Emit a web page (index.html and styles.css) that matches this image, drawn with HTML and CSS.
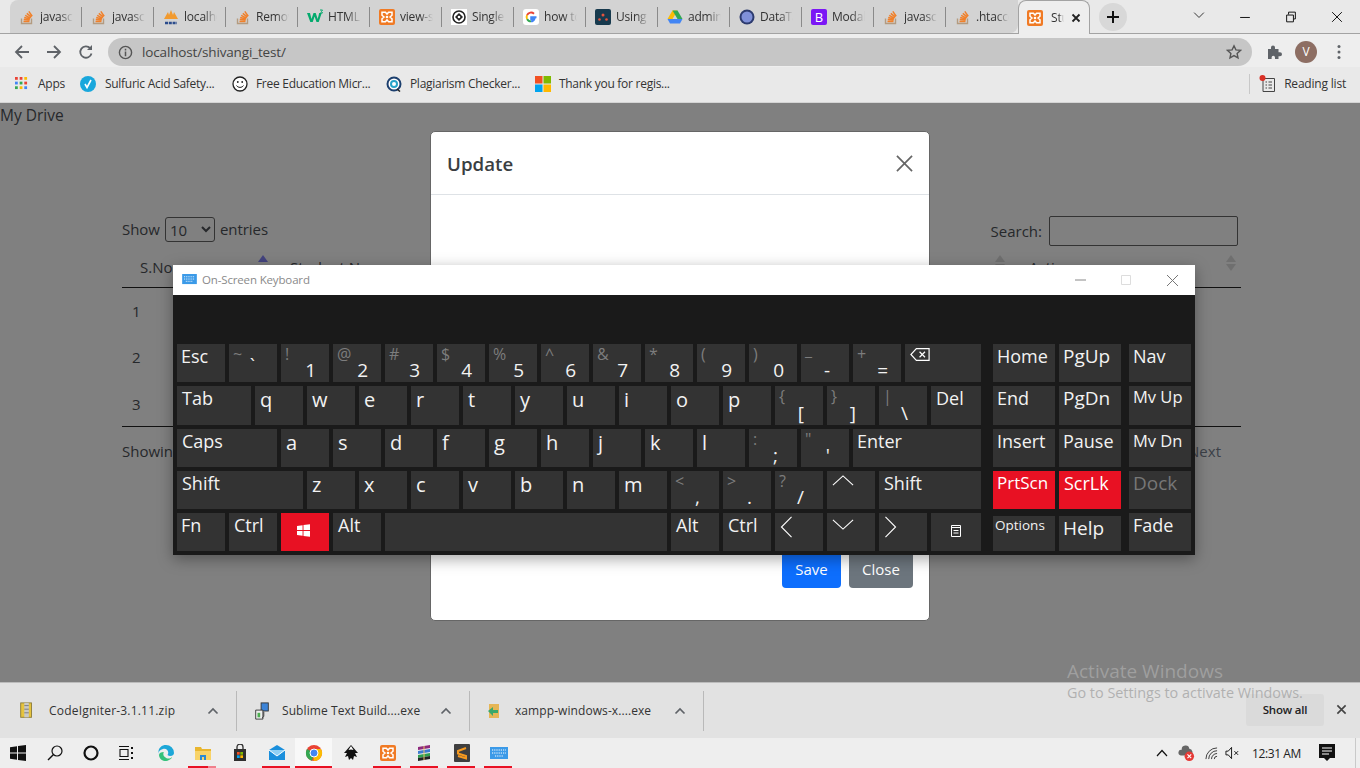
FILE: index.html
```html
<!DOCTYPE html>
<html lang="en">
<head>
<meta charset="utf-8">
<title>Student</title>
<link rel="stylesheet" href="styles.css">
</head>
<body>
<svg class="defs" width="0" height="0" aria-hidden="true">
  <symbol id="so" viewBox="0 0 16 16"><path d="M2.500 9.500v5h10v-5" fill="none" stroke="#b39b80" stroke-width="1.400"/><path d="M4.500 12.600h6M4.700 10.600l6 .5M5.200 8.500l5.800 1.500M6.200 6.300l5.300 2.800M7.800 4.300l4.600 3.800M9.800 2.400l3.400 4.800" fill="none" stroke="#f0802a" stroke-width="1.500"/></symbol>
  <symbol id="xampp" viewBox="0 0 16 16"><rect width="16" height="16" rx="2" fill="#f07a24"/><path d="M3 3.200h3.400L8 5l1.600-1.800H13V6.200L11 8l2 1.800v3H9.600L8 11l-1.600 1.800H3V9.800L5 8 3 6.200z" fill="none" stroke="#fff" stroke-width="1.500"/><circle cx="8" cy="8" r="1.300" fill="#fff"/></symbol>
  <symbol id="chev" viewBox="0 0 12 8"><path d="M1.500 6.500 6 2l4.500 4.500" fill="none" stroke="#5f6368" stroke-width="1.700"/></symbol>
</svg>

<header class="tabstrip">
  <div class="tabs">
    <div class="tab"><svg class="fav"><use href="#so"/></svg><span class="tab-label">javascript</span></div>
    <div class="tab"><svg class="fav"><use href="#so"/></svg><span class="tab-label">javascript</span></div>
    <div class="tab"><svg class="fav" viewBox="0 0 16 16"><path d="M1 10 5 3l1 3 2-5 2 5 1-3 4 7z" fill="#f29a2e"/><path d="M2 14h12" stroke="#2b4c8c" stroke-width="2.600" stroke-dasharray="3 .8"/></svg><span class="tab-label">localhost</span></div>
    <div class="tab"><svg class="fav"><use href="#so"/></svg><span class="tab-label">Remove</span></div>
    <div class="tab"><svg class="fav" viewBox="0 0 16 16"><path d="M0 4h3l1.500 6L6.500 4h2.200l2 6L12.200 4h2.500l-3 9H9.500L7.600 7.500 5.700 13H3.300z" fill="#04aa6d"/><path d="M13 1h2.500l-1 1.500 1 1.500H13" fill="none" stroke="#04aa6d"/></svg><span class="tab-label">HTML</span></div>
    <div class="tab"><svg class="fav"><use href="#xampp"/></svg><span class="tab-label">view-source</span></div>
    <div class="tab"><svg class="fav" viewBox="0 0 16 16"><rect width="16" height="16" fill="#fff"/><circle cx="8" cy="8" r="6" fill="none" stroke="#222" stroke-width="1.600"/><path d="M8 4 12 8 8 12 4 8z" fill="#222"/><circle cx="8" cy="8" r="1.300" fill="#fff"/></svg><span class="tab-label">Single</span></div>
    <div class="tab"><svg class="fav" viewBox="0 0 16 16"><rect width="16" height="16" rx="3" fill="#fff"/><path d="M13.500 8.200H8.200v2h3.100a3.400 3.400 0 0 1-3.300 2.200" fill="none" stroke="#4285f4" stroke-width="1.900"/><path d="M8 12.400a4.400 4.400 0 0 1-3.900-2.400" fill="none" stroke="#34a853" stroke-width="1.900"/><path d="M4.100 10a4.400 4.400 0 0 1 0-4" fill="none" stroke="#fbbc05" stroke-width="1.900"/><path d="M4.100 6A4.400 4.400 0 0 1 11 4.700" fill="none" stroke="#ea4335" stroke-width="1.900"/></svg><span class="tab-label">how to</span></div>
    <div class="tab"><svg class="fav" viewBox="0 0 16 16"><rect width="16" height="16" rx="2" fill="#173a4e"/><circle cx="8" cy="6" r="1.500" fill="#e5533d"/><circle cx="4.500" cy="10.500" r="1.300" fill="#e5533d"/><circle cx="11.500" cy="10.500" r="1.300" fill="#e5533d"/></svg><span class="tab-label">Using</span></div>
    <div class="tab"><svg class="fav" viewBox="0 0 16 16"><path d="M5.500 1.500h5l-5 8.500H.5z" fill="#fbbc04"/><path d="M10.500 1.500 15.500 10h-5L5.500 1.500z" fill="#34a853"/><path d="M.5 10h15l-2.500 4.500H3z" fill="#4285f4"/></svg><span class="tab-label">admin</span></div>
    <div class="tab"><svg class="fav" viewBox="0 0 16 16"><circle cx="8" cy="8" r="7.500" fill="#2c3a6e"/><circle cx="8" cy="8" r="5.500" fill="#7f90d8"/></svg><span class="tab-label">DataTables</span></div>
    <div class="tab"><span class="fav boot">B</span><span class="tab-label">Modal</span></div>
    <div class="tab"><svg class="fav"><use href="#so"/></svg><span class="tab-label">javascript</span></div>
    <div class="tab"><svg class="fav"><use href="#so"/></svg><span class="tab-label">.htaccess</span></div>
    <div class="tab tab-active"><svg class="fav"><use href="#xampp"/></svg><span class="tab-label tab-label-short">Student</span><svg class="tab-x" viewBox="0 0 10 10"><path d="M1.500 1.500l7 7M8.500 1.500l-7 7" stroke="#222" stroke-width="1.800"/></svg></div>
  </div>
  <div class="newtab"><svg width="14" height="14" viewBox="0 0 14 14"><path d="M7 1v12M1 7h12" stroke="#111" stroke-width="2"/></svg></div>
  <div class="winctl">
    <svg class="ctl" viewBox="0 0 46 34"><path d="M18 13l5 5 5-5" fill="none" stroke="#333"/></svg>
    <svg class="ctl" viewBox="0 0 46 34"><path d="M18 18h10" stroke="#111"/></svg>
    <svg class="ctl" viewBox="0 0 46 34"><path d="M18.500 15.500h7v7h-7zM20.500 15v-2.500h7v7H26" fill="none" stroke="#111"/></svg>
    <svg class="ctl" viewBox="0 0 46 34"><path d="M18 12.500l10 10M28 12.500l-10 10" stroke="#111"/></svg>
  </div>
</header>

<nav class="toolbar">
  <svg class="nav-ic" viewBox="0 0 16 16"><path d="M15 8H2M8 2 2 8l6 6" fill="none" stroke="#5f6368" stroke-width="1.800"/></svg>
  <svg class="nav-ic" viewBox="0 0 16 16"><path d="M1 8h13M8 2l6 6-6 6" fill="none" stroke="#5f6368" stroke-width="1.800"/></svg>
  <svg class="nav-ic" viewBox="0 0 16 16"><path d="M13.500 9.500a5.700 5.700 0 1 1-1.300-5.300" fill="none" stroke="#5f6368" stroke-width="1.800"/><path d="M14 1v5H9z" fill="#5f6368"/></svg>
  <div class="omnibox">
    <svg class="info" viewBox="0 0 16 16"><circle cx="8" cy="8" r="6.500" fill="none" stroke="#555" stroke-width="1.500"/><path d="M8 7v5M8 4v1.800" stroke="#555" stroke-width="1.600"/></svg>
    <span class="url">localhost/shivangi_test/</span>
    <svg class="star" viewBox="0 0 16 16"><path d="M8 1.800l1.900 4.100 4.500.5-3.300 3 .9 4.400L8 11.600l-4 2.200.9-4.400-3.300-3 4.500-.5z" fill="none" stroke="#555" stroke-width="1.400"/></svg>
  </div>
  <svg class="puzzle" viewBox="0 0 16 16"><path d="M2 5h3V3.500a2 2 0 0 1 4 0V5h3.500v3.200H14a2 2 0 0 1 0 4h-1.500V15H9v-1.500a1.700 1.700 0 0 0-3.400 0V15H2z" fill="#5f6368"/></svg>
  <div class="avatar">V</div>
  <svg class="dots" viewBox="0 0 4 16"><circle cx="2" cy="2.500" r="1.500" fill="#5f6368"/><circle cx="2" cy="8" r="1.500" fill="#5f6368"/><circle cx="2" cy="13.500" r="1.500" fill="#5f6368"/></svg>
</nav>

<nav class="bookmarks">
  <div class="bm bm-apps"><svg class="bm-ic" viewBox="0 0 14 14"><g><rect x="0" y="0" width="3" height="3" fill="#ea4335"/><rect x="5" y="0" width="3" height="3" fill="#ea4335"/><rect x="10" y="0" width="3" height="3" fill="#fbbc05"/><rect x="0" y="5" width="3" height="3" fill="#4285f4"/><rect x="5" y="5" width="3" height="3" fill="#34a853"/><rect x="10" y="5" width="3" height="3" fill="#ea4335"/><rect x="0" y="10" width="3" height="3" fill="#34a853"/><rect x="5" y="10" width="3" height="3" fill="#fbbc05"/><rect x="10" y="10" width="3" height="3" fill="#4285f4"/></g></svg><span>Apps</span></div>
  <div class="bm bm-2"><svg class="bm-ic16" viewBox="0 0 16 16"><circle cx="8" cy="8" r="8" fill="#19a7dc"/><path d="M5 8l2 3.500L11 4" fill="none" stroke="#fff" stroke-width="1.600"/></svg><span>Sulfuric Acid Safety...</span></div>
  <div class="bm bm-3"><svg class="bm-ic16" viewBox="0 0 16 16"><circle cx="8" cy="8" r="7" fill="#fff" stroke="#222" stroke-width="1.300"/><path d="M4.500 9.500c1.500 2.500 5.500 2.500 7 0" fill="none" stroke="#222"/><circle cx="5.800" cy="6" r=".9" fill="#222"/><circle cx="10.200" cy="6" r=".9" fill="#222"/></svg><span>Free Education Micr...</span></div>
  <div class="bm bm-4"><svg class="bm-ic16" viewBox="0 0 16 16"><circle cx="8" cy="8" r="6.500" fill="#fff" stroke="#1c3f6e" stroke-width="2"/><circle cx="8" cy="8" r="3" fill="none" stroke="#27a3c9" stroke-width="2"/><path d="M11 13l3 2.500" stroke="#222" stroke-width="1.500"/></svg><span>Plagiarism Checker...</span></div>
  <div class="bm bm-5"><svg class="bm-ic16" viewBox="0 0 16 16"><rect width="7.500" height="7.500" fill="#f25022"/><rect x="8.500" width="7.500" height="7.500" fill="#7fba00"/><rect y="8.500" width="7.500" height="7.500" fill="#00a4ef"/><rect x="8.500" y="8.500" width="7.500" height="7.500" fill="#ffb900"/></svg><span>Thank you for regis...</span></div>
  <div class="reading"><svg class="reading-ic" viewBox="0 0 18 18"><path d="M4 3.500h11.500v13H4z" fill="none" stroke="#444"/><path d="M6.500 7h1.500M9.500 7H13M6.500 10h1.500M9.500 10H13M6.500 13h1.500M9.500 13H13" stroke="#444" stroke-width="1.200"/><circle cx="3.500" cy="3" r="3" fill="#d93025"/></svg><span>Reading list</span></div>
</nav>

<main class="page">
  <div class="mydrive">My Drive</div>
  <section class="dt">
    <div class="dt-top">
      <label class="dt-len">Show <select class="dt-sel"><option>10</option></select> entries</label>
      <label class="dt-search">Search: <input class="dt-input" type="text"></label>
    </div>
    <table class="dt-table">
      <thead>
        <tr><th class="th-a">S.No<span class="sort sort-up"></span></th><th class="th-b">Student Name<span class="sort sort-both sort-b"></span></th><th class="th-c">Action<span class="sort sort-both sort-c"></span></th></tr>
      </thead>
      <tbody>
        <tr><td>1</td><td></td><td></td></tr>
        <tr><td>2</td><td></td><td></td></tr>
        <tr><td>3</td><td></td><td></td></tr>
      </tbody>
    </table>
    <div class="dt-foot"><span>Showing 1 to 3 of 3 entries</span><span class="dt-next">Next</span></div>
  </section>

  <div class="modal">
    <div class="modal-head"><h5 class="modal-title">Update</h5><svg class="modal-x" viewBox="0 0 18 18"><path d="M1 1l16 16M17 1 1 17" stroke="#666" stroke-width="1.800"/></svg></div>
    <div class="modal-body"></div>
    <div class="modal-foot"><button class="btn btn-save">Save</button><button class="btn btn-close">Close</button></div>
  </div>

  <div class="osk">
    <div class="osk-title">
      <svg class="osk-ic" viewBox="0 0 16 12"><rect width="16" height="11" fill="#3b9ae8"/><path d="M2 3h12M2 5.500h12M4 8h8" stroke="#fff" stroke-dasharray="1 1"/></svg>
      <span class="osk-name">On-Screen Keyboard</span>
      <svg class="osk-ctl" viewBox="0 0 46 30"><path d="M18 15h11" stroke="#888"/></svg>
      <svg class="osk-ctl" viewBox="0 0 46 30"><path d="M18.500 10.500h9v9h-9z" fill="none" stroke="#ddd"/></svg>
      <svg class="osk-ctl" viewBox="0 0 46 30"><path d="M18 10l11 11M29 10 18 21" stroke="#777"/></svg>
    </div>
    <div class="osk-body">
      <div class="keys">
        <div class="row row-a">
          <div class="k k-4">Esc</div>
          <div class="k sym"><span class="s">~</span><span class="m m-tick">`</span></div>
          <div class="k sym"><span class="s">!</span><span class="m">1</span></div>
          <div class="k sym"><span class="s">@</span><span class="m">2</span></div>
          <div class="k sym"><span class="s">#</span><span class="m">3</span></div>
          <div class="k sym"><span class="s">$</span><span class="m">4</span></div>
          <div class="k sym"><span class="s">%</span><span class="m">5</span></div>
          <div class="k sym"><span class="s">^</span><span class="m">6</span></div>
          <div class="k sym"><span class="s">&amp;</span><span class="m">7</span></div>
          <div class="k sym"><span class="s">*</span><span class="m">8</span></div>
          <div class="k sym"><span class="s">(</span><span class="m">9</span></div>
          <div class="k sym"><span class="s">)</span><span class="m">0</span></div>
          <div class="k sym p"><span class="s s-under">_</span><span class="m">-</span></div>
          <div class="k sym"><span class="s">+</span><span class="m">=</span></div>
          <div class="k k-back"><svg class="back-ic" viewBox="0 0 22 16"><path d="M7 1.500h14v13H7L1 8z" fill="none" stroke="#fff" stroke-width="1.300"/><path d="M10.500 5l6 6M16.500 5l-6 6" stroke="#fff" stroke-width="1.300"/></svg></div>
        </div>
        <div class="row row-b">
          <div class="k k-tab">Tab</div>
          <div class="k l">q</div><div class="k l">w</div><div class="k l">e</div><div class="k l">r</div><div class="k l">t</div><div class="k l">y</div><div class="k l">u</div><div class="k l">i</div><div class="k l">o</div><div class="k l">p</div>
          <div class="k sym p"><span class="s">{</span><span class="m">[</span></div>
          <div class="k sym p"><span class="s">}</span><span class="m">]</span></div>
          <div class="k sym p"><span class="s">|</span><span class="m">\</span></div>
          <div class="k k-del">Del</div>
        </div>
        <div class="row row-a">
          <div class="k k-caps">Caps</div>
          <div class="k l">a</div><div class="k l">s</div><div class="k l">d</div><div class="k l">f</div><div class="k l">g</div><div class="k l">h</div><div class="k l">j</div><div class="k l">k</div><div class="k l">l</div>
          <div class="k sym p"><span class="s">:</span><span class="m">;</span></div>
          <div class="k sym p"><span class="s">"</span><span class="m">'</span></div>
          <div class="k k-enter k-4">Enter</div>
        </div>
        <div class="row row-a">
          <div class="k k-shift">Shift</div>
          <div class="k l">z</div><div class="k l">x</div><div class="k l">c</div><div class="k l">v</div><div class="k l">b</div><div class="k l">n</div><div class="k l">m</div>
          <div class="k sym p"><span class="s">&lt;</span><span class="m">,</span></div>
          <div class="k sym p"><span class="s">&gt;</span><span class="m">.</span></div>
          <div class="k sym p"><span class="s">?</span><span class="m">/</span></div>
          <div class="k"><svg class="arrow" viewBox="0 0 24 14"><path d="M1 12 12 2l11 10" fill="none" stroke="#fff" stroke-width="1.200"/></svg></div>
          <div class="k k-rshift">Shift</div>
        </div>
        <div class="row row-a">
          <div class="k k-4">Fn</div>
          <div class="k">Ctrl</div>
          <div class="k k-red k-center"><svg class="win-ic" viewBox="0 0 14 14"><path d="M0 2.200 6 1.400v5.100H0zM7 1.200 14 .2v6.300H7zM0 7.500h6v5.100l-6-.8zM7 7.500h7v6.300l-7-1z" fill="#fff"/></svg></div>
          <div class="k">Alt</div>
          <div class="k k-space"></div>
          <div class="k">Alt</div>
          <div class="k">Ctrl</div>
          <div class="k"><svg class="arrow-v" viewBox="0 0 14 24"><path d="M12.500 1 1.500 12l11 11" fill="none" stroke="#fff" stroke-width="1.200"/></svg></div>
          <div class="k"><svg class="arrow arrow-d" viewBox="0 0 24 14"><path d="M1 2l11 10L23 2" fill="none" stroke="#fff" stroke-width="1.200"/></svg></div>
          <div class="k"><svg class="arrow-v" viewBox="0 0 14 24"><path d="M1.500 1l11 11-11 11" fill="none" stroke="#fff" stroke-width="1.200"/></svg></div>
          <div class="k k-del k-center"><svg class="menu-ic" viewBox="0 0 10 12"><path d="M.5.500h9v11h-9zM.5 2.500h9" fill="none" stroke="#fff"/><path d="M2.500 5.500h5M2.500 8h5" stroke="#fff"/></svg></div>
        </div>
      </div>
      <div class="keys">
        <div class="row row-a"><div class="k k-side">Home</div><div class="k k-side k-big">PgUp</div><div class="k k-side k-nav">Nav</div></div>
        <div class="row row-b"><div class="k k-side">End</div><div class="k k-side k-big">PgDn</div><div class="k k-side k-nav k-sm k-up">Mv Up</div></div>
        <div class="row row-a"><div class="k k-side">Insert</div><div class="k k-side">Pause</div><div class="k k-side k-nav k-sm">Mv Dn</div></div>
        <div class="row row-a"><div class="k k-side k-red k-prt">PrtScn</div><div class="k k-side k-red k-scr">ScrLk</div><div class="k k-side k-nav k-dim">Dock</div></div>
        <div class="row row-a"><div class="k k-side k-low k-xs">Options</div><div class="k k-side k-low k-help">Help</div><div class="k k-side k-nav">Fade</div></div>
      </div>
    </div>
  </div>
</main>

<section class="downloads">
  <div class="dl dl-1"><svg class="dl-ic" viewBox="0 0 16 20"><rect x="1" y="1" width="12" height="16" fill="#e6c43e" stroke="#8a7b3a"/><rect x="5" y="1" width="5" height="16" fill="#c9c9c9"/><path d="M5 4h5M5 8h5M5 12h5" stroke="#777"/></svg><span class="dl-name dl-wide">CodeIgniter-3.1.11.zip</span><svg class="dl-chev"><use href="#chev"/></svg></div>
  <div class="dl dl-2"><svg class="dl-ic dl-ic2" viewBox="0 0 18 20"><rect x="8" y="1" width="8" height="9" fill="#3c84d8" stroke="#333"/><path d="M2 9h8v10H2z" fill="#eee" stroke="#333"/><path d="M4 12h3v5H4z" fill="#4caf50"/><path d="M11 11v5l-2 2" fill="none" stroke="#333"/></svg><span class="dl-name">Sublime Text Build....exe</span><svg class="dl-chev"><use href="#chev"/></svg></div>
  <div class="dl dl-3"><svg class="dl-ic dl-ic3" viewBox="0 0 14 16"><path d="M2 1h10v14H2z" fill="#e6b656"/><path d="M1 8l5-4v3h5v3H6v3z" fill="#3aa86b"/></svg><span class="dl-name">xampp-windows-x....exe</span><svg class="dl-chev"><use href="#chev"/></svg></div>
  <div class="dl-spacer"></div>
  <button class="showall">Show all</button>
  <svg class="dl-x" viewBox="0 0 12 12"><path d="M1.500 1.500l9 9M10.500 1.500l-9 9" stroke="#444" stroke-width="1.800"/></svg>
</section>

<footer class="taskbar">
  <div class="slot slot-a"><svg class="tb16" viewBox="0 0 16 16"><path d="M0 2.200 7 1.200v6.300H0zM8 1 16 0v7.500H8zM0 8.500h7v6.300l-7-1zM8 8.500h8V16l-8-1.100z" fill="#111"/></svg></div>
  <div class="slot slot-b"><svg class="tb16" viewBox="0 0 16 16"><circle cx="10" cy="6" r="5" fill="none" stroke="#111" stroke-width="1.200"/><path d="M6.500 9.500 1 15" stroke="#111" stroke-width="1.400"/></svg></div>
  <div class="slot slot-c"><svg class="tb16" viewBox="0 0 16 16"><circle cx="8" cy="8" r="6.500" fill="none" stroke="#111" stroke-width="2.200"/></svg></div>
  <div class="slot slot-c"><svg class="tb16" viewBox="0 0 16 16"><path d="M1 1.500h10M1 14.500h10M2 4.500h8v7H2z" fill="none" stroke="#111" stroke-width="1.100"/><path d="M14 2v2M14 7v2M14 12v2" stroke="#111" stroke-width="2"/></svg></div>
  <div class="slot slot-first"><svg class="tb16" viewBox="0 0 16 16"><path d="M8 0a8 8 0 0 1 8 8c0 1-1 3-4 3-2 0-3-1-2-2 1-2-1-6-5-5S0 8 1 10C-1 4 3 0 8 0z" fill="#1da7d8"/><path d="M1 10c0 4 5 8 10 5 2-1 3-2 3-3-2 2-5 2-7 0-2-1-2-4-1-5-3 0-5 1-5 3z" fill="#34c17a"/></svg></div>
  <div class="slot run run-split"><svg class="tb18" viewBox="0 0 18 18"><path d="M1 3h6l1 2h9v3H1z" fill="#e9b62f"/><path d="M1 7h16v9H1z" fill="#f8d368"/><path d="M6 16v-5h6v5h-2v-3H8v3z" fill="#2a8ad4"/></svg></div>
  <div class="slot"><svg class="tb18" viewBox="0 0 18 18"><path d="M3 5h12v12H3z" fill="#2f2f2f"/><path d="M6 5V3a3 3 0 0 1 6 0v2" fill="none" stroke="#2f2f2f" stroke-width="1.300"/><rect x="6" y="8" width="2.700" height="2.700" fill="#f25022"/><rect x="9.300" y="8" width="2.700" height="2.700" fill="#7fba00"/><rect x="6" y="11.300" width="2.700" height="2.700" fill="#00a4ef"/><rect x="9.300" y="11.300" width="2.700" height="2.700" fill="#ffb900"/></svg></div>
  <div class="slot run"><svg class="tb18" viewBox="0 0 18 18"><path d="M1 6l8-5 8 5v10H1z" fill="#1a8fdc"/><path d="M1 6l8 6 8-6" fill="#8fd0f5"/><path d="M1 6l8 6 8-6" fill="none" stroke="#fff"/></svg></div>
  <div class="slot run run-active"><svg class="tb18" viewBox="0 0 18 18"><circle cx="9" cy="9" r="8" fill="#ea4335"/><path d="M9 9 2 5a8 8 0 0 0 5 11.800z" fill="#34a853"/><path d="M9 5h7a8 8 0 0 1-7.500 12z" fill="#fbbc05"/><circle cx="9" cy="9" r="4" fill="#4285f4" stroke="#fff"/></svg></div>
  <div class="slot"><svg class="tb18" viewBox="0 0 18 18"><path d="M9 1l7 8h-3l2 4-3-1-1 4-2-2-2 2-1-4-3 1 2-4H2z" fill="#111"/><path d="M9 2 6.500 6 9 5.500 11.500 6z" fill="#fff"/></svg></div>
  <div class="slot run"><svg class="tb18 xa"><use href="#xampp"/></svg></div>
  <div class="slot run"><svg class="tb18" viewBox="0 0 18 18"><path d="M2 3l12-2v3L2 6z" fill="#8e2a7c"/><path d="M2 7l12-2v3L2 10z" fill="#3d7bd0"/><path d="M2 11l12-2v3L2 14z" fill="#2f9e4f"/><path d="M2 14l12-2v3L2 17z" fill="#222"/><path d="M8 2v14" stroke="#e9c46a"/></svg></div>
  <div class="slot run"><svg class="tb18" viewBox="0 0 18 18"><rect x="1" y="0" width="16" height="18" rx="1" fill="#3f3f3f"/><path d="M13 4 5 7v2.500l8 2.500v2.500L5 12" fill="none" stroke="#f79a20" stroke-width="2"/></svg></div>
  <div class="slot run"><svg class="tb18" viewBox="0 0 18 14"><rect y="1" width="18" height="12" fill="#3b9ae8"/><path d="M2 4h14M2 7h14M5 10h8" stroke="#fff" stroke-dasharray="1.200 1"/></svg></div>
  <div class="tray">
    <svg class="tray-up" viewBox="0 0 12 8"><path d="M1 7l5-5.500L11 7" fill="none" stroke="#111" stroke-width="1.200"/></svg>
    <svg class="tray-cloud" viewBox="0 0 18 18"><path d="M3 11a3 3 0 0 1 1-6 4 4 0 0 1 8-1 4 4 0 0 1 2 7z" fill="#666"/><circle cx="12" cy="12" r="5" fill="#e53935"/><path d="M10 10l4 4M14 10l-4 4" stroke="#fff" stroke-width="1.200"/></svg>
    <svg class="tray-wifi" viewBox="0 0 14 14"><path d="M1 13A12 12 0 0 1 13 1M4 13a9 9 0 0 1 9-9M7 13a6 6 0 0 1 6-6M10 13a3 3 0 0 1 3-3" fill="none" stroke="#333"/></svg>
    <svg class="tray-vol" viewBox="0 0 16 14"><path d="M1 5h2.500L7 1v12L3.500 9H1z" fill="none" stroke="#111"/><path d="M10 5l4 4M14 5l-4 4" stroke="#111"/></svg>
    <span class="clock">12:31 AM</span>
    <svg class="tray-note" viewBox="0 0 16 18"><path d="M0 0h16v14h-5l-3 3-3-3H0z" fill="#111"/><path d="M3 4h10M3 7h10M3 10h7" stroke="#fff"/></svg>
    <span class="tray-sep"></span>
  </div>
</footer>

<div class="activate"><div class="act-1">Activate Windows</div><div class="act-2">Go to Settings to activate Windows.</div></div>
</body>
</html>
```
FILE: styles.css
```css
* { box-sizing: border-box; }
html, body { margin: 0; padding: 0; }
body {
  position: relative;
  width: 1360px;
  height: 768px;
  overflow: hidden;
  display: flex;
  flex-direction: column;
  font-family: "Open Sans", "Noto Sans", sans-serif;
  color: #212529;
  background: #808080;
}
.defs { position: absolute; }

/* tab strip */
.tabstrip {
  height: 34px;
  flex: none;
  display: flex;
  background: #e9e9e9;
  border-bottom: 1px solid #a3a3a3;
}
.tabs { display: flex; margin-left: 10px; }
.tab {
  width: 72px;
  height: 33px;
  display: flex;
  align-items: center;
  gap: 5px;
  padding-left: 9px;
  background: #d3d3d3;
  position: relative;
}
.tab:first-child { border-top-left-radius: 8px; }
.tab:nth-child(14) { border-bottom-right-radius: 8px; }
.tab:not(.tab-active):not(:nth-child(14))::after {
  content: "";
  position: absolute;
  right: 0;
  top: 7px;
  height: 20px;
  width: 1px;
  background: #8a8a8a;
}
.fav { width: 16px; height: 16px; flex: none; }
.boot {
  background: #7b16f5;
  color: #fff;
  border-radius: 2px;
  font-size: 13px;
  line-height: 16px;
  text-align: center;
}
.tab-label {
  width: 33px;
  overflow: hidden;
  white-space: nowrap;
  font-size: 12px;
  letter-spacing: -.2px;
  color: #333;
  -webkit-mask-image: linear-gradient(90deg, #000 60%, transparent);
  mask-image: linear-gradient(90deg, #000 60%, transparent);
}
.tab-active {
  background: #eeeeee;
  height: 34px;
  border-radius: 8px 8px 0 0;
  padding-left: 8px;
  gap: 8px;
  border: 1px solid #a3a3a3;
  border-bottom: 0;
}
.tab-label-short { width: 13px; flex: none; }
.tab-x { width: 10px; height: 10px; margin-left: -1px; }
.newtab {
  width: 28px;
  height: 28px;
  margin: 3px 0 0 9px;
  border-radius: 50%;
  background: #d8d8d8;
  display: flex;
  align-items: center;
  justify-content: center;
}
.winctl { margin-left: auto; display: flex; }
.ctl { width: 46px; height: 33px; }

/* toolbar */
.toolbar {
  height: 33px;
  flex: none;
  display: flex;
  align-items: center;
  background: #eeeeee;
  padding-left: 14px;
  padding-top: 3px;
}
.nav-ic { width: 16px; height: 16px; margin-right: 16px; flex: none; }
.omnibox {
  width: 1144px;
  height: 28px;
  margin-left: -2px;
  border-radius: 14px;
  background: #c6c6c6;
  display: flex;
  align-items: center;
  padding-left: 10px;
}
.info { width: 15px; height: 15px; }
.url { margin-left: 9px; font-size: 13.500px; letter-spacing: -.15px; color: #444; }
.star { width: 16px; height: 16px; margin-left: auto; margin-right: 10px; }
.puzzle { width: 16px; height: 16px; margin-left: 14px; flex: none; }
.avatar {
  width: 22px;
  height: 22px;
  margin-left: 13px;
  border-radius: 50%;
  background: #8d6e63;
  color: #fff;
  font-size: 12px;
  line-height: 22px;
  text-align: center;
  flex: none;
}
.dots { width: 4px; height: 16px; margin-left: 20px; flex: none; }

/* bookmarks */
.bookmarks {
  height: 36px;
  flex: none;
  display: flex;
  align-items: center;
  background: #e9e9e9;
  border-bottom: 1px solid #d4d4d4;
  padding-bottom: 2px;
  font-size: 12px;
  letter-spacing: -.27px;
  color: #333;
}
.bm { display: flex; align-items: center; }
.bm-apps { margin-left: 15px; gap: 10px; }
.bm-ic { width: 13px; height: 13px; }
.bm-ic16 { width: 16px; height: 16px; flex: none; }
.bm-2 { margin-left: 15px; gap: 9px; width: 152px; }
.bm-3 { gap: 8px; width: 154px; }
.bm-4 { gap: 8px; width: 149px; }
.bm-5 { gap: 8px; }
.reading {
  margin-left: auto;
  margin-right: 14px;
  display: flex;
  align-items: center;
  gap: 7px;
  border-left: 1px solid #c8c8c8;
  padding-left: 9px;
  height: 20px;
  letter-spacing: -.2px;
}
.reading-ic { width: 18px; height: 18px; }

/* page */
.page { flex: 1; position: relative; background: #808080; }
.mydrive { font-size: 15.500px; line-height: 24px; height: 24px; color: #26282b; }
.dt { margin: 90px 119px 0 122px; font-size: 15px; color: #26282b; }
.dt-top { display: flex; justify-content: space-between; height: 37px; }
.dt-len { display: flex; align-items: flex-start; gap: 5px; line-height: 25px; letter-spacing: -.05px; }
.dt-sel {
  width: 50px;
  height: 25px;
  background: transparent;
  border: 1px solid #333;
  border-radius: 3px;
  font-family: inherit;
  font-size: 15px;
  color: #26282b;
}
.dt-search { display: flex; align-items: flex-start; gap: 7px; margin: -1px 3px 0 0; line-height: 30px; }
.dt-input {
  width: 189px;
  height: 30px;
  background: transparent;
  border: 1px solid #333;
  border-radius: 2px;
}
.dt-table { width: 100%; border-collapse: collapse; table-layout: fixed; }
.dt-table th {
  position: relative;
  height: 33px;
  padding: 0 0 6px 18px;
  font-weight: 400;
  text-align: left;
  border-bottom: 1px solid #111;
}
.th-a { width: 150px; }
.th-c { width: 230px; }
.dt-table td { height: 46.500px; padding: 1px 0 0 10px; }
.dt-table tbody tr:last-child td { border-bottom: 1px solid #111; }
.sort { position: absolute; right: 4px; top: 1px; width: 10px; height: 16px; }
.sort::before, .sort::after {
  content: "";
  position: absolute;
  left: 0;
  border-left: 5px solid transparent;
  border-right: 5px solid transparent;
}
.sort::before { top: 0; border-bottom: 7px solid #6f6f6f; }
.sort::after { top: 9px; border-top: 7px solid #6f6f6f; }
.sort-up::before { border-bottom-color: #43437e; }
.sort-up::after { border-top-color: transparent; }
.sort-b { right: 6px; }
.sort-c { right: 5px; }
.dt-foot { display: flex; justify-content: space-between; padding-top: 14px; }
.dt-next { margin-right: 20px; color: #3c4148; }

/* modal */
.modal {
  position: absolute;
  left: 430px;
  top: 28px;
  width: 500px;
  height: 490px;
  display: flex;
  flex-direction: column;
  background: #fff;
  border: 1px solid #666;
  border-radius: 5px;
}
.modal-head {
  height: 63px;
  flex: none;
  display: flex;
  align-items: center;
  justify-content: space-between;
  padding: 0 16px;
  border-bottom: 1px solid #dee2e6;
}
.modal-title { margin: 0; font-size: 18.700px; font-weight: 600; color: #3a3e42; }
.modal-x { width: 17px; height: 17px; }
.modal-body { flex: 1; }
.modal-foot { display: flex; justify-content: flex-end; gap: 8px; padding: 0 16px 32px; }
.btn {
  height: 38px;
  border: 0;
  padding: 0 0 1px;
  border-radius: 4px;
  color: #fff;
  font-family: inherit;
  font-size: 15px;
}
.btn-save { width: 59px; background: #0d6efd; }
.btn-close { width: 64px; background: #6c757d; }

/* on-screen keyboard */
.osk {
  position: absolute;
  left: 173px;
  top: 162px;
  width: 1022px;
  height: 290px;
  background: #1a1a1a;
  box-shadow: 0 4px 14px rgba(0, 0, 0, .35);
}
.osk-title {
  height: 30px;
  display: flex;
  align-items: center;
  background: #fff;
  padding: 0 0 1px 9px;
}
.osk-ic { width: 15px; height: 11px; }
.osk-name { margin-left: 5px; font-size: 11.500px; letter-spacing: -.15px; color: #8a8a8a; margin-right: auto; }
.osk-ctl { width: 46px; height: 30px; }
.osk-body { display: flex; gap: 12px; padding: 49px 0 0 4px; }
.keys { display: flex; flex-direction: column; gap: 4px; }
.row { display: flex; gap: 4px; }
.row-a { height: 38px; }
.row-b { height: 39px; }
.k {
  width: 48px;
  height: 100%;
  flex: none;
  background: #333;
  color: #f2f2f2;
  font-size: 18px;
  line-height: 24px;
  padding: 0 0 0 5px;
  overflow: hidden;
}
.k-4 { padding-left: 4px; }
.l { font-size: 20px; line-height: 27px; }
.k-back { width: 76px; padding-left: 5px; }
.back-ic { width: 20px; height: 15px; margin-top: 3px; display: block; }
.k-tab { width: 74px; }
.k-del { width: 50px; }
.k-caps { width: 100px; }
.k-enter { width: 128px; }
.k-shift { width: 126px; }
.k-rshift { width: 102px; }
.k-space { width: 282px; }
.k-side { width: 62px; padding-left: 4px; }
.k-nav { margin-left: 4px; }
.k-big { font-size: 19px; }
.k-sm { font-size: 16.500px; }
.k-up { line-height: 21px; }
.k-xs { font-size: 13.500px; line-height: 18px; padding-left: 2px; }
.k-prt { font-size: 17px; }
.k-scr { padding-left: 5px; }
.k-help { font-size: 19px; }
.k-dim { color: #777; font-size: 19px; }
.k-red { background: #e81123; color: #fff; }
.k-low { margin-top: 3px; height: 35px; }
.k-center { display: flex; align-items: center; justify-content: center; padding: 0; }
.sym {
  display: flex;
  justify-content: space-between;
  padding: 0 13px 0 4px;
}
.p { padding-right: 19px; }
.s { font-size: 16px; line-height: 20px; color: #7d7d7d; }
.s-under { line-height: 12px; }
.m { font-size: 19px; line-height: 24px; align-self: flex-end; }
.m-tick { margin: 0 9px 5px 0; }
.arrow { display: block; width: 22px; height: 13px; margin-top: 3px; }
.arrow-d { margin-top: 5px; }
.arrow-v { display: block; width: 13px; height: 22px; margin-top: 3px; }
.win-ic { width: 13px; height: 13px; margin: 0 3px 3px 0; }
.menu-ic { width: 10px; height: 12px; margin: 0 1px 3px 0; }

/* downloads */
.downloads {
  height: 56px;
  flex: none;
  display: flex;
  align-items: center;
  background: #e2e2e2;
  border-top: 1px solid #bcbcbc;
  font-size: 12px;
  letter-spacing: .08px;
  color: #333;
}
.dl { height: 40px; display: flex; align-items: center; border-right: 1px solid #b9b9b9; flex: none; }
.dl-1 { width: 237px; padding-left: 19px; }
.dl-2 { width: 233px; padding-left: 16px; }
.dl-3 { width: 234px; padding-left: 17px; }
.dl-ic { width: 16px; height: 18px; margin-right: 14px; flex: none; }
.dl-ic2 { width: 18px; margin-right: 11px; }
.dl-ic3 { width: 14px; margin-right: 14px; }
.dl-name { flex: 1; white-space: nowrap; }
.dl-wide { letter-spacing: .2px; }
.dl-chev { width: 12px; height: 8px; margin-right: 17px; flex: none; }
.dl-spacer { flex: 1; }
.showall {
  width: 78px;
  height: 32px;
  margin: 0 12px 2px 0;
  border: 0;
  border-radius: 3px;
  background: #dadada;
  color: #222;
  font-family: inherit;
  font-size: 11.500px;
  font-weight: 600;
  letter-spacing: -.2px;
}
.dl-x { width: 11px; height: 11px; margin: 0 13px 2px 0; }

/* taskbar */
.taskbar {
  height: 30px;
  flex: none;
  display: flex;
  align-items: center;
  background: #eeeeee;
}
.slot {
  width: 37px;
  height: 30px;
  flex: none;
  position: relative;
  display: flex;
  align-items: center;
  justify-content: center;
}
.slot-a { width: 36px; }
.slot-c { width: 35px; }
.slot-first { margin-left: 4px; }
.run::after {
  content: "";
  position: absolute;
  left: 4px;
  right: 5px;
  bottom: 0;
  height: 2px;
  background: #e81123;
}
.run-split::after { background: linear-gradient(90deg, #e81123 70%, #f0808c 70%); }
.run-active { background: #f8f8f8; }
.run-active::after { left: 0; right: 0; }
.tb16 { width: 16px; height: 16px; }
.tb18 { width: 18px; height: 18px; }
.xa { width: 16px; height: 16px; }
.tray { margin-left: auto; display: flex; align-items: center; height: 30px; width: 205px; }
.tray-up { width: 12px; height: 8px; margin: 0 10px 0 1px; flex: none; }
.tray-cloud { width: 17px; height: 17px; margin-right: 10px; flex: none; }
.tray-wifi { width: 13px; height: 13px; margin-right: 7px; flex: none; }
.tray-vol { width: 15px; height: 14px; margin-right: 12px; flex: none; }
.clock { font-size: 12px; letter-spacing: -.4px; color: #222; width: 67px; flex: none; white-space: nowrap; }
.tray-note { width: 16px; height: 18px; flex: none; }
.tray-sep { width: 1px; height: 30px; margin-left: 20px; background: #c9c9c9; flex: none; }

/* watermark */
.activate { position: absolute; left: 1067px; top: 659px; pointer-events: none; white-space: nowrap; }
.act-1 { font-size: 19px; line-height: 24px; color: rgba(170, 170, 170, .75); }
.act-2 { font-size: 14.400px; line-height: 20px; color: rgba(160, 160, 160, .75); }
```
